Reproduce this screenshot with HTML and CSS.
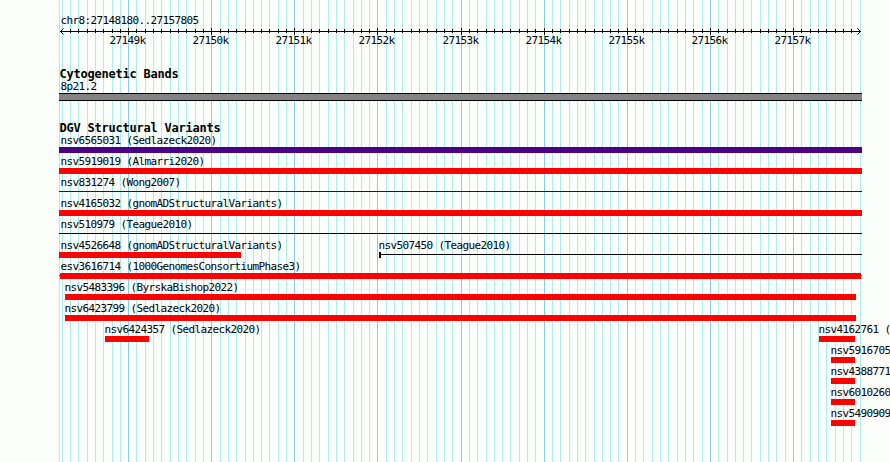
FILE: index.html
```
<!DOCTYPE html>
<html lang="en">
<head>
    <meta charset="UTF-8">
    <title>chr8:27148180..27157805</title>
    <link rel="stylesheet" href="styles.css">
</head>
<body>
    <div id="browser">
        <svg id="grid" width="890" height="462"></svg>
        <div class="region">chr8:27148180..27157805</div>
        <svg id="ruler" width="890" height="22">
            <path class="axis" d="M60 6.5H861"/>
            <path class="axis" d="M63.5 3.5L60.5 6.5L63.5 9.5M857.5 3.5L860.5 6.5L857.5 9.5"/>
        </svg>

        <h2 class="cyto">Cytogenetic Bands</h2>
        <div class="band-name">8p21.2</div>
        <div class="band"></div>

        <h2 class="dgv">DGV Structural Variants</h2>
        <div class="row">
            <div class="variant" style="margin-left:59px;width:803px"><span class="first">nsv6565031 (Sedlazeck2020)</span><i class="bar inversion"></i></div>
        </div>
        <div class="row">
            <div class="variant" style="margin-left:59px;width:803px"><span class="first">nsv5919019 (Almarri2020)</span><i class="bar"></i></div>
        </div>
        <div class="row">
            <div class="variant" style="margin-left:59px;width:803px"><span class="first">nsv831274 (Wong2007)</span><i class="line gain"></i></div>
        </div>
        <div class="row">
            <div class="variant" style="margin-left:59px;width:803px"><span class="first">nsv4165032 (gnomADStructuralVariants)</span><i class="bar"></i></div>
        </div>
        <div class="row">
            <div class="variant" style="margin-left:59px;width:803px"><span class="first">nsv510979 (Teague2010)</span><i class="line"></i></div>
        </div>
        <div class="row">
            <div class="variant" style="margin-left:59px;width:182px"><span class="first">nsv4526648 (gnomADStructuralVariants)</span><i class="bar"></i></div>
            <div class="variant" style="margin-left:138px;width:483px"><span>nsv507450 (Teague2010)</span><i class="line capped"></i></div>
        </div>
        <div class="row">
            <div class="variant" style="margin-left:59px;width:803px"><span class="first">esv3616714 (1000GenomesConsortiumPhase3)</span><i class="bar tails"></i></div>
        </div>
        <div class="row">
            <div class="variant" style="margin-left:65px;width:791px"><span>nsv5483396 (ByrskaBishop2022)</span><i class="bar"></i></div>
        </div>
        <div class="row">
            <div class="variant" style="margin-left:65px;width:791px"><span>nsv6423799 (Sedlazeck2020)</span><i class="bar"></i></div>
        </div>
        <div class="row">
            <div class="variant" style="margin-left:105px;width:44px"><span>nsv6424357 (Sedlazeck2020)</span><i class="bar"></i></div>
            <div class="variant" style="margin-left:670px;width:36px"><span>nsv4162761 (</span><i class="bar"></i></div>
        </div>
        <div class="row">
            <div class="variant" style="margin-left:831px;width:24px"><span>nsv5916705</span><i class="bar"></i></div>
        </div>
        <div class="row">
            <div class="variant" style="margin-left:831px;width:24px"><span>nsv4388771</span><i class="bar"></i></div>
        </div>
        <div class="row">
            <div class="variant" style="margin-left:831px;width:24px"><span>nsv6010260</span><i class="bar"></i></div>
        </div>
        <div class="row">
            <div class="variant" style="margin-left:831px;width:24px"><span>nsv5490909</span><i class="bar"></i></div>
        </div>
    </div>
    <script type="text/javascript" src="grid.js"></script>
</body>
</html>
```

FILE: styles.css
```
* {
    margin: 0;
    padding: 0;
}
body {
    background: #fcfefc;
    color: #000;
    font-family: "DejaVu Sans Mono", "Liberation Mono", monospace;
    font-size: 11px;
    letter-spacing: -0.62px;
}
#browser {
    position: relative;
    width: 890px;
    height: 462px;
    overflow: hidden;
}
/* grid lines lie behind every track */
#grid {
    position: absolute;
    top: 0;
    left: 0;
    z-index: -1;
}
#grid .minor {
    fill: #aceeec;
}
#grid .major {
    fill: #84ceec;
}
.region {
    height: 12px;
    padding: 13px 0 0 60.4px;
    line-height: 15px;
}
#ruler {
    display: block;
}
#ruler .axis {
    fill: none;
    stroke: #000;
}
h2 {
    padding-left: 59.5px;
    font-size: 12px;
    line-height: 14px;
    letter-spacing: -0.22px;
}
.cyto {
    height: 13px;
    padding-top: 20px;
}
.band-name {
    height: 13px;
    padding-left: 60.4px;
    line-height: 13px;
}
.band {
    width: 803px;
    height: 6px;
    margin-left: 59px;
    border-top: 1px solid #000;
    border-bottom: 1px solid #000;
    background: #848284;
}
.dgv {
    height: 11px;
    padding-top: 20px;
}
/* variants */
.row {
    display: flex;
    height: 21px;
}
.variant {
    flex: none;
}
.variant span {
    display: block;
    height: 13px;
    margin-left: -0.6px;
    padding-top: 2px;
    line-height: 13px;
    white-space: nowrap;
}
.variant .first {
    margin-left: 1.4px;
}
.bar {
    display: block;
    height: 6px;
    background: #f00;
}
.inversion {
    background: #4c0084;
}
.line {
    display: block;
    height: 1px;
    margin-top: 2px;
    background: #000;
}
.gain {
    background: #00f;
}
.capped {
    height: 6px;
    margin-top: 0;
    background: linear-gradient(#000, #000) 0 0 / 2px 6px no-repeat,
                linear-gradient(#000, #000) 0 2px / 100% 1px no-repeat;
}
.tails {
    background: linear-gradient(#f00, #f00) 1px 0 / 801px 6px no-repeat,
                linear-gradient(#f00, #f00) 0 2px / 100% 1px no-repeat;
}
```

FILE: grid.js
```
var svgNS = "http://www.w3.org/2000/svg";
var grid = document.getElementById("grid");
var ruler = document.getElementById("ruler");
var start = 27148180;
var scale = 0.08311;

function addRect(parent, x, y, height, cls) {
    var rect = document.createElementNS(svgNS, "rect");
    rect.setAttribute("x", x);
    rect.setAttribute("y", y);
    rect.setAttribute("width", 1);
    rect.setAttribute("height", height);
    rect.setAttribute("class", cls);
    parent.appendChild(rect);
}

addRect(grid, 59, 0, 462, "minor");
for (var pos = 27148200; pos <= 27157800; pos += 100) {
    var x = Math.round(60 + (pos - start) * scale);
    if (pos % 1000 === 0) {
        addRect(grid, x, 0, 462, "major");
        addRect(ruler, x, 3, 7, "tick");
        var text = document.createElementNS(svgNS, "text");
        text.setAttribute("x", x - 18.6);
        text.setAttribute("y", 19);
        text.textContent = pos / 1000 + "k";
        ruler.appendChild(text);
    } else {
        addRect(grid, x, 0, 462, "minor");
        // the last position is under the arrow head
        if (x > 62 && x < 860) {
            addRect(ruler, x, 4, 4, "tick");
        }
    }
}
```
